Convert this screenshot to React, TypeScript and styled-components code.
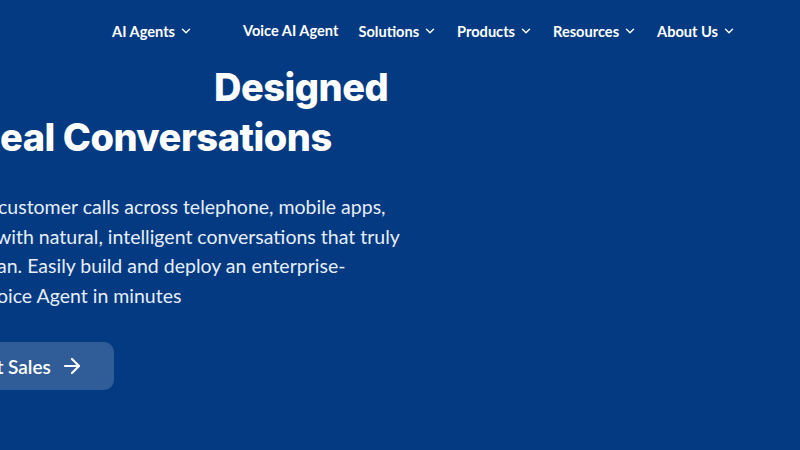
import React from "react";
import styled, { createGlobalStyle } from "styled-components";
import { ChevronDown, ArrowRight } from "lucide-react";

const BG = "#033a82";

const GlobalStyle = createGlobalStyle`
  html, body {
    margin: 0;
    padding: 0;
    background: ${BG};
  }
  body {
    font-family: Lato, "Open Sans", Arial, sans-serif;
    -webkit-font-smoothing: antialiased;
  }
`;

const Page = styled.div`
  width: 800px;
  height: 450px;
  overflow: hidden;
  background: ${BG};
  color: #ffffff;
  display: flex;
  flex-direction: column;
`;

const Nav = styled.nav`
  height: 62px;
  display: flex;
  align-items: center;
  padding-left: 112px;
  gap: 20px;
`;

const NavItem = styled.a<{ $gapAfter?: number; $raised?: boolean }>`
  display: inline-flex;
  align-items: center;
  gap: 4px;
  font-size: 14.6px;
  font-weight: 700;
  color: #ffffff;
  text-decoration: none;
  white-space: nowrap;
  margin-right: ${(p) => p.$gapAfter ?? 0}px;
  transform: translateY(${(p) => (p.$raised ? -1 : 0)}px);
`;

const Hero = styled.section`
  margin-left: -300px;
  display: flex;
  flex-direction: column;
`;

const Headline = styled.h1`
  margin: 0;
  font-family: Inter, Lato, Arial, sans-serif;
  font-size: 38px;
  font-weight: 800;
  line-height: 50px;
  letter-spacing: -0.5px;
`;

const Paragraph = styled.p`
  margin: 30px 0 0;
  font-size: 19.5px;
  font-weight: 400;
  line-height: 29.5px;
  color: #e6eef9;
`;

const Line = styled.span`
  display: flex;
  white-space: nowrap;
`;

const Lead = styled.span<{ $w: number; $hidden?: boolean }>`
  flex: none;
  width: ${(p) => p.$w}px;
  display: flex;
  justify-content: flex-end;
  white-space: pre;
  opacity: ${(p) => (p.$hidden ? 0 : 1)};
`;

const Button = styled.a`
  align-self: flex-start;
  margin: 32px 0 0 209px;
  height: 48px;
  padding: 0 30px 0 28px;
  display: inline-flex;
  align-items: center;
  gap: 9px;
  border-radius: 10px;
  background: rgba(255, 255, 255, 0.18);
  font-size: 19px;
  font-weight: 600;
  color: #ffffff;
  text-decoration: none;
  white-space: nowrap;
`;

const navItems = [
  { label: "AI Agents", menu: true, gapAfter: 30 },
  { label: "Voice AI Agent", menu: false, raised: true },
  { label: "Solutions", menu: true },
  { label: "Products", menu: true },
  { label: "Resources", menu: true },
  { label: "About Us", menu: true },
];

export default function App() {
  return (
    <Page>
      <GlobalStyle />
      <Nav>
        {navItems.map((item) => (
          <NavItem key={item.label} href="#" $gapAfter={item.gapAfter} $raised={item.raised}>
            {item.label}
            {item.menu && <ChevronDown size={14} strokeWidth={2.4} />}
          </NavItem>
        ))}
      </Nav>
      <Hero>
        <Headline>
          <Line>
            <Lead $w={514} $hidden>
              {"Voice AI Agents "}
            </Lead>
            Designed
          </Line>
          <Line>
            <Lead $w={300}>{"for R"}</Lead>
            eal Conversations
          </Line>
        </Headline>
        <Paragraph>
          <Line>
            <Lead $w={298}>{"Automate "}</Lead>
            customer calls across telephone, mobile apps,
          </Line>
          <Line>
            <Lead $w={296}>{"and web "}</Lead>
            with natural, intelligent conversations that truly
          </Line>
          <Line>
            <Lead $w={297}>{"feel hum"}</Lead>
            an. Easily build and deploy an enterprise-
          </Line>
          <Line>
            <Lead $w={297}>{"grade V"}</Lead>
            oice Agent in minutes
          </Line>
        </Paragraph>
        <Button href="#">
          Contact Sales
          <ArrowRight size={24} strokeWidth={2.2} />
        </Button>
      </Hero>
    </Page>
  );
}
